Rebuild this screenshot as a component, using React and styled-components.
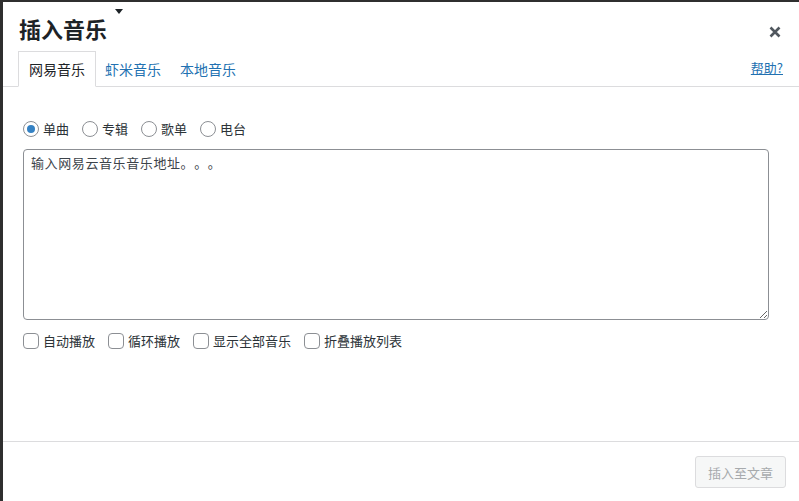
import React from "react";
import styled, { createGlobalStyle } from "styled-components";

const GlobalStyle = createGlobalStyle`
  html, body { margin: 0; padding: 0; background: #333; }
  body { font-family: "Noto Sans CJK SC", "Noto Sans", "Liberation Sans", sans-serif; text-spacing-trim: space-all; }
  * { box-sizing: border-box; }
`;

const Backdrop = styled.div`
  width: 799px;
  height: 501px;
  padding: 2px 0 0 3px;
  display: flex;
  background: #2f2f2f;
`;

const Modal = styled.div`
  flex: 1;
  background: #fff;
  display: flex;
  flex-direction: column;
`;

const TitleRow = styled.div`
  height: 49px;
  display: flex;
  align-items: center;
  padding: 0 18px 0 16px;
`;

const Title = styled.h1`
  margin: 0;
  font-size: 22px;
  font-weight: 700;
  line-height: 1;
  color: #1d2327;
  margin-top: 2px;
`;

const Caret = styled.span`
  align-self: flex-start;
  margin: 7px 0 0 8px;
  width: 0;
  height: 0;
  border-left: 4px solid transparent;
  border-right: 4px solid transparent;
  border-top: 5px solid #1d2327;
`;

const CloseButton = styled.button`
  margin-left: auto;
  margin-top: 10px;
  padding: 0;
  border: 0;
  background: none;
  width: 12px;
  height: 12px;
  display: flex;
  cursor: pointer;
`;

const TabsRow = styled.div`
  display: flex;
  align-items: flex-end;
  height: 36px;
  padding: 0 16px 0 15px;
  border-bottom: 1px solid #dcdcde;
`;

const Tab = styled.div`
  height: 36px;
  margin-bottom: -1px;
  padding: ${(p) => (p.$active ? "0 10px" : "0 9px 0 8px")};
  display: flex;
  align-items: center;
  font-size: 14px;
  color: ${(p) => (p.$active ? "#1d2327" : "#2271b1")};
  background: ${(p) => (p.$active ? "#fff" : "transparent")};
  border: 1px solid ${(p) => (p.$active ? "#dcdcde" : "transparent")};
  border-bottom-color: ${(p) => (p.$active ? "#fff" : "transparent")};
  cursor: pointer;
`;

const HelpLink = styled.a`
  margin-left: auto;
  align-self: center;
  margin-bottom: 3px;
  font-size: 13px;
  color: #2271b1;
  text-decoration: underline;
`;

const Content = styled.div`
  flex: 1;
  padding: 34px 30px 0 20px;
  display: flex;
  flex-direction: column;
`;

const OptionRow = styled.div`
  display: flex;
  align-items: center;
  height: 16px;
  gap: 13px;
`;

const Option = styled.label`
  display: flex;
  align-items: center;
  gap: 4px;
  font-size: 13px;
  line-height: 16px;
  color: #2c3338;
`;

const Radio = styled.span`
  width: 16px;
  height: 16px;
  border-radius: 50%;
  border: 1px solid #8c8f94;
  background: #fff;
  display: flex;
  align-items: center;
  justify-content: center;
  &::after {
    content: "";
    width: 8px;
    height: 8px;
    border-radius: 50%;
    background: ${(p) => (p.$checked ? "#3582c4" : "transparent")};
  }
`;

const Checkbox = styled.span`
  width: 16px;
  height: 16px;
  border-radius: 4px;
  border: 1px solid #8c8f94;
  background: #fff;
`;

const TextArea = styled.textarea`
  margin: 12px 0 13px;
  width: 100%;
  height: 171px;
  padding: 3px 7px;
  border: 1px solid #8c8f94;
  border-radius: 4px;
  font-family: "Noto Sans CJK SC", sans-serif;
  font-size: 13px;
  line-height: 1.5;
  letter-spacing: 0.6px;
  color: #2c3338;
  text-spacing-trim: space-all;
  resize: both;
  &::placeholder {
    color: #3c434a;
    text-spacing-trim: space-all;
  }
`;

const Footer = styled.div`
  height: 60px;
  border-top: 1px solid #dcdcde;
  display: flex;
  align-items: center;
  justify-content: flex-end;
  padding: 1px 13px 0 0;
`;

const InsertButton = styled.button`
  height: 32px;
  padding: 0 12px;
  font-family: inherit;
  font-size: 13px;
  color: #a7aaad;
  background: #f6f7f7;
  border: 1px solid #dcdcde;
  border-radius: 3px;
`;

const radios = [
  { label: "单曲", checked: true },
  { label: "专辑" },
  { label: "歌单" },
  { label: "电台" },
];

const checks = ["自动播放", "循环播放", "显示全部音乐", "折叠播放列表"];

export default function App() {
  return (
    <>
      <GlobalStyle />
      <Backdrop>
        <Modal>
          <TitleRow>
            <Title>插入音乐</Title>
            <Caret />
            <CloseButton aria-label="关闭">
              <svg width="12" height="12" viewBox="0 0 12 12">
                <path d="M1.5 1.5 L10.5 10.5 M10.5 1.5 L1.5 10.5" stroke="#50575e" strokeWidth="2.6" strokeLinecap="butt" />
              </svg>
            </CloseButton>
          </TitleRow>
          <TabsRow>
            <Tab $active>网易音乐</Tab>
            <Tab>虾米音乐</Tab>
            <Tab>本地音乐</Tab>
            <HelpLink href="#">帮助?</HelpLink>
          </TabsRow>
          <Content>
            <OptionRow>
              {radios.map((r) => (
                <Option key={r.label}>
                  <Radio $checked={r.checked} />
                  {r.label}
                </Option>
              ))}
            </OptionRow>
            <TextArea placeholder="输入网易云音乐音乐地址。。。" />
            <OptionRow>
              {checks.map((c) => (
                <Option key={c}>
                  <Checkbox />
                  {c}
                </Option>
              ))}
            </OptionRow>
          </Content>
          <Footer>
            <InsertButton disabled>插入至文章</InsertButton>
          </Footer>
        </Modal>
      </Backdrop>
    </>
  );
}
